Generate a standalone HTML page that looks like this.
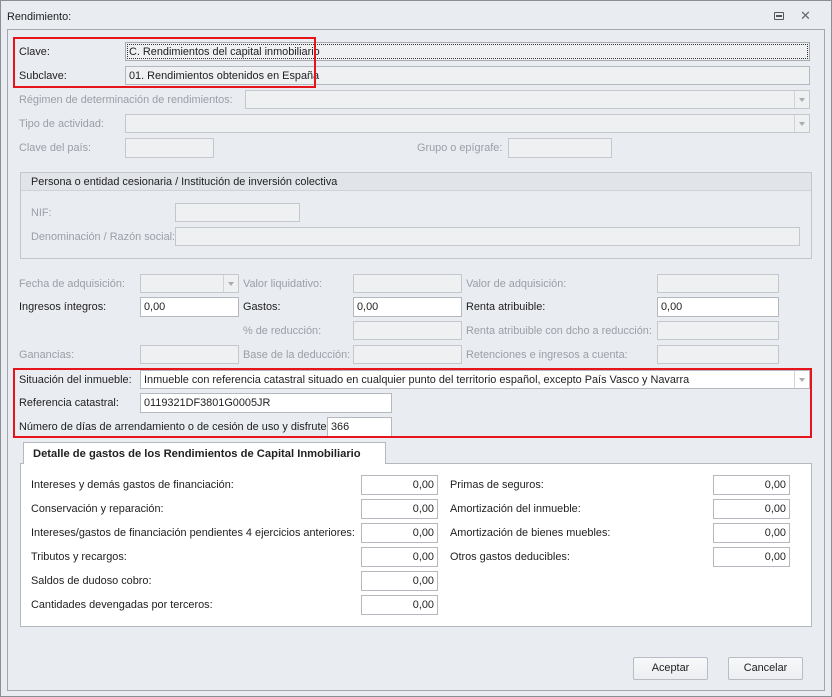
<!DOCTYPE html>
<html><head><meta charset="utf-8"><style>
*{box-sizing:border-box;margin:0;padding:0}
body{width:832px;height:697px;background:#e9ecf1;font-family:"Liberation Sans","DejaVu Sans",sans-serif;font-size:10.9px;color:#1e1e1e;position:relative;overflow:hidden}
.a{position:absolute;white-space:nowrap}
.l{position:absolute;white-space:nowrap;line-height:19px;padding-top:1px}
.d{color:#9a9ea6}
.b{position:absolute;border:1px solid #b4b8bf;background:#fff;line-height:18px;padding-left:3px;white-space:nowrap;overflow:hidden}
.g{background:#eff0f2;border-color:#c4c7cc}
.r{text-align:right;padding-right:3px}
.arr{position:absolute;right:0;top:0;bottom:0;width:15px;border-left:1px solid #d2d4d8}
.arr:after{content:"";position:absolute;left:4px;top:7px;border:3px solid transparent;border-top:4px solid #a8abb0}
.red{position:absolute;border:2px solid #e8141b}
.btn{position:absolute;border:1px solid #b9bcc2;border-radius:2px;background:linear-gradient(#f7f8fa,#eceef1);text-align:center;line-height:21px}
</style></head><body>
<div class="a" style="left:0;top:0;width:832px;height:697px;border:1px solid #8a8f96"></div>
<div class="a" style="left:7px;top:11px">Rendimiento:</div>
<div class="a" style="left:774px;top:12px;width:10px;height:8px;border:1px solid #555;border-radius:1px"><div style="margin:2px 1px;height:2px;border:1px solid #555"></div></div>
<div class="a" style="left:800px;top:8px;color:#666;font-size:13px">✕</div>
<div class="a" style="left:7px;top:29px;width:818px;height:662px;border:1px solid #a4a8ae"></div>

<div class="l" style="left:19px;top:42px">Clave:</div>
<div class="b" style="left:125px;top:42px;width:685px;height:19px;background:#eff0f2;border-color:#a6a9ae;outline:1px dotted #333;outline-offset:-3px">C. Rendimientos del capital inmobiliario</div>
<div class="l" style="left:19px;top:66px">Subclave:</div>
<div class="b g" style="left:125px;top:66px;width:685px;height:19px;color:#1e1e1e;border-color:#b4b8bf">01. Rendimientos obtenidos en España</div>
<div class="red" style="left:13px;top:37px;width:303px;height:51px"></div>

<div class="l d" style="left:19px;top:90px">Régimen de determinación de rendimientos:</div>
<div class="b g" style="left:245px;top:90px;width:565px;height:19px"><div class="arr"></div></div>
<div class="l d" style="left:19px;top:114px">Tipo de actividad:</div>
<div class="b g" style="left:125px;top:114px;width:685px;height:19px"><div class="arr"></div></div>
<div class="l d" style="left:19px;top:138px">Clave del país:</div>
<div class="b g" style="left:125px;top:138px;width:89px;height:20px"></div>
<div class="l d" style="left:417px;top:138px">Grupo o epígrafe:</div>
<div class="b g" style="left:508px;top:138px;width:104px;height:20px"></div>

<div class="a" style="left:20px;top:172px;width:792px;height:87px;border:1px solid #c4c7cc"></div>
<div class="a" style="left:21px;top:173px;width:790px;height:18px;background:#e1e4e9;border-bottom:1px solid #cfd2d6;padding-left:10px;line-height:18px">Persona o entidad cesionaria / Institución de inversión colectiva</div>
<div class="l d" style="left:31px;top:203px">NIF:</div>
<div class="b g" style="left:175px;top:203px;width:125px;height:19px"></div>
<div class="l d" style="left:31px;top:227px">Denominación / Razón social:</div>
<div class="b g" style="left:175px;top:227px;width:625px;height:19px"></div>

<div class="l d" style="left:19px;top:274px">Fecha de adquisición:</div>
<div class="b g" style="left:140px;top:274px;width:99px;height:19px"><div class="arr"></div></div>
<div class="l d" style="left:243px;top:274px">Valor liquidativo:</div>
<div class="b g" style="left:353px;top:274px;width:109px;height:19px"></div>
<div class="l d" style="left:466px;top:274px">Valor de adquisición:</div>
<div class="b g" style="left:657px;top:274px;width:122px;height:19px"></div>

<div class="l" style="left:19px;top:297px">Ingresos íntegros:</div>
<div class="b" style="left:140px;top:297px;width:99px;height:20px">0,00</div>
<div class="l" style="left:243px;top:297px">Gastos:</div>
<div class="b" style="left:353px;top:297px;width:109px;height:20px">0,00</div>
<div class="l" style="left:466px;top:297px">Renta atribuible:</div>
<div class="b" style="left:657px;top:297px;width:122px;height:20px">0,00</div>

<div class="l d" style="left:243px;top:321px">% de reducción:</div>
<div class="b g" style="left:353px;top:321px;width:109px;height:19px"></div>
<div class="l d" style="left:466px;top:321px">Renta atribuible con dcho a reducción:</div>
<div class="b g" style="left:657px;top:321px;width:122px;height:19px"></div>

<div class="l d" style="left:19px;top:345px">Ganancias:</div>
<div class="b g" style="left:140px;top:345px;width:99px;height:19px"></div>
<div class="l d" style="left:243px;top:345px">Base de la deducción:</div>
<div class="b g" style="left:353px;top:345px;width:109px;height:19px"></div>
<div class="l d" style="left:466px;top:345px">Retenciones e ingresos a cuenta:</div>
<div class="b g" style="left:657px;top:345px;width:122px;height:19px"></div>

<div class="l" style="left:19px;top:370px">Situación del inmueble:</div>
<div class="b" style="left:140px;top:370px;width:670px;height:19px">Inmueble con referencia catastral situado en cualquier punto del territorio español, excepto País Vasco y Navarra<div class="arr"></div></div>
<div class="l" style="left:19px;top:393px">Referencia catastral:</div>
<div class="b" style="left:140px;top:393px;width:252px;height:20px">0119321DF3801G0005JR</div>
<div class="l" style="left:19px;top:417px">Número de días de arrendamiento o de cesión de uso y disfrute</div>
<div class="b" style="left:327px;top:417px;width:65px;height:20px">366</div>
<div class="red" style="left:13px;top:368px;width:799px;height:70px"></div>

<div class="a" style="left:20px;top:463px;width:792px;height:164px;background:#fff;border:1px solid #b4b8bf"></div>
<div class="a" style="left:23px;top:442px;width:363px;height:22px;background:#fff;border:1px solid #b4b8bf;border-bottom:none;font-weight:bold;font-size:11.2px;padding-left:9px;line-height:22px;color:#222">Detalle de gastos de los Rendimientos de Capital Inmobiliario</div>

<div class="l" style="left:31px;top:475px">Intereses y demás gastos de financiación:</div>
<div class="b r" style="left:361px;top:475px;width:77px;height:20px">0,00</div>
<div class="l" style="left:31px;top:499px">Conservación y reparación:</div>
<div class="b r" style="left:361px;top:499px;width:77px;height:20px">0,00</div>
<div class="l" style="left:31px;top:523px">Intereses/gastos de financiación pendientes 4 ejercicios anteriores:</div>
<div class="b r" style="left:361px;top:523px;width:77px;height:20px">0,00</div>
<div class="l" style="left:31px;top:547px">Tributos y recargos:</div>
<div class="b r" style="left:361px;top:547px;width:77px;height:20px">0,00</div>
<div class="l" style="left:31px;top:571px">Saldos de dudoso cobro:</div>
<div class="b r" style="left:361px;top:571px;width:77px;height:20px">0,00</div>
<div class="l" style="left:31px;top:595px">Cantidades devengadas por terceros:</div>
<div class="b r" style="left:361px;top:595px;width:77px;height:20px">0,00</div>

<div class="l" style="left:450px;top:475px">Primas de seguros:</div>
<div class="b r" style="left:713px;top:475px;width:77px;height:20px">0,00</div>
<div class="l" style="left:450px;top:499px">Amortización del inmueble:</div>
<div class="b r" style="left:713px;top:499px;width:77px;height:20px">0,00</div>
<div class="l" style="left:450px;top:523px">Amortización de bienes muebles:</div>
<div class="b r" style="left:713px;top:523px;width:77px;height:20px">0,00</div>
<div class="l" style="left:450px;top:547px">Otros gastos deducibles:</div>
<div class="b r" style="left:713px;top:547px;width:77px;height:20px">0,00</div>

<div class="btn" style="left:633px;top:657px;width:75px;height:23px">Aceptar</div>
<div class="btn" style="left:728px;top:657px;width:75px;height:23px">Cancelar</div>
</body></html>
